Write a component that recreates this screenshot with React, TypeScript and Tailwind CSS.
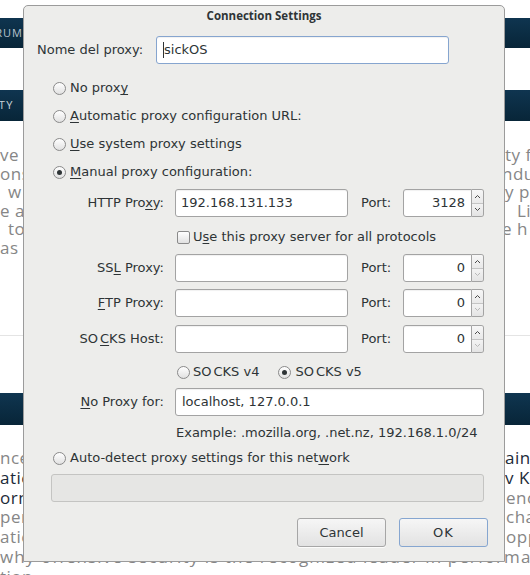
import React from "react";

function U({ children }: { children: React.ReactNode }) {
  return <span className="underline decoration-[1px] underline-offset-[2px]">{children}</span>;
}

function Radio({ checked = false }: { checked?: boolean }) {
  return (
    <span className="flex w-[13px] h-[13px] shrink-0 items-center justify-center rounded-full border border-[#8a8a8a] bg-linear-to-b from-[#ffffff] to-[#e1e1e1]">
      {checked ? <span className="w-[5px] h-[5px] rounded-full bg-[#2e3436]" /> : null}
    </span>
  );
}

function Check() {
  return (
    <span className="w-[13px] h-[13px] shrink-0 rounded-[2px] border border-[#8a8a8a] bg-linear-to-b from-[#ffffff] to-[#e1e1e1]" />
  );
}

function Chevron({ up, dim }: { up?: boolean; dim?: boolean }) {
  return (
    <svg width="7" height="5" viewBox="0 0 7 5">
      <path
        d={up ? "M1 4L3.5 1.5L6 4" : "M1 1L3.5 3.5L6 1"}
        fill="none"
        stroke={dim ? "#b8b8b8" : "#4a4a4a"}
        strokeWidth="1"
      />
    </svg>
  );
}

function Spin({ value, downDim }: { value: string; downDim?: boolean }) {
  return (
    <div className="flex h-[28px]">
      <div className="w-[69px] h-full rounded-l-[3px] border border-[#a3a3a3] bg-white flex items-center justify-end pr-[6px] shadow-[inset_0_1px_1px_rgba(0,0,0,0.06)]">
        {value}
      </div>
      <div className="w-[12px] h-full flex flex-col border border-l-0 border-[#a3a3a3] rounded-r-[3px] overflow-hidden">
        <div className="flex-1 flex items-center justify-center bg-linear-to-b from-[#f7f7f7] to-[#e9e9e9] border-b border-[#c4c4c4]">
          <Chevron up />
        </div>
        <div className="flex-1 flex items-center justify-center bg-linear-to-b from-[#f3f3f3] to-[#e4e4e4]">
          <Chevron dim={downDim} />
        </div>
      </div>
    </div>
  );
}

function ProxyRow({ label, value, port, downDim }: { label: React.ReactNode; value: string; port: string; downDim?: boolean }) {
  return (
    <div className="flex items-center h-[28px]">
      <div className="w-[140px] text-right whitespace-nowrap">{label}</div>
      <div className="ml-[11px] w-[173px] h-[28px] rounded-[3px] border border-[#a3a3a3] bg-white flex items-center px-[5px] shadow-[inset_0_1px_1px_rgba(0,0,0,0.06)]">
        {value}
      </div>
      <div className="ml-[13px] w-[42px]">Port:</div>
      <Spin value={port} downDim={downDim} />
    </div>
  );
}

function RadioRow({ checked, children }: { checked?: boolean; children: React.ReactNode }) {
  return (
    <div className="flex items-center h-[28px] pl-[29px] gap-[4px]">
      <Radio checked={checked} />
      <span className="whitespace-nowrap">{children}</span>
    </div>
  );
}

function Background() {
  const grey = "text-[#868686]";
  const dark = "text-[#1c2a38]";
  return (
    <div className="w-[530px] font-['Open_Sans',sans-serif]">
      <div className="h-[18px]" />
      <div className="h-[30px] bg-linear-to-b from-[#0f3550] to-[#082538] flex items-center">
        <div className="w-[23px] flex justify-end overflow-hidden">
          <span className="text-[11px] tracking-[1px] text-[#b8c4ce] whitespace-nowrap">FORUM</span>
        </div>
      </div>
      <div className="h-[42px]" />
      <div className="h-[31px] bg-linear-to-b from-[#0f3550] to-[#082538] flex items-center">
        <div className="w-[14px] flex justify-end overflow-hidden">
          <span className="text-[11px] tracking-[1.5px] text-[#c9d3da] whitespace-nowrap">SECURITY</span>
        </div>
      </div>
      <div className={`h-[214px] pt-[25px] flex justify-between text-[17px] leading-[18.6px] tracking-[0.5px] ${grey}`}>
        <div className="w-[23px] whitespace-nowrap overflow-hidden">
          <div>ve</div>
          <div>ons</div>
          <div className="pl-[8px]">w</div>
          <div>e a</div>
          <div className="pl-[8px]">to</div>
          <div>as u</div>
        </div>
        <div className="w-[25px] whitespace-nowrap overflow-hidden">
          <div>ty f</div>
          <div className="-ml-[3px]">ndu</div>
          <div>y p</div>
          <div className="pl-[12px]">Li</div>
          <div className="-ml-[3px]">e h</div>
        </div>
      </div>
      <div className="h-px bg-[#e4e4e4]" />
      <div className="h-[57px]" />
      <div className="h-[32px] bg-linear-to-b from-[#0f3550] to-[#082538]" />
      <div className="pt-[23px] text-[17px] leading-[19.8px] whitespace-nowrap tracking-[0.5px]">
        <div className="flex justify-between">
          <span className={`${grey} w-[23px] overflow-hidden`}>nce</span>
          <span className={`${dark} w-[25px] overflow-hidden`}>ain</span>
        </div>
        <div className="flex justify-between">
          <span className={`${dark} w-[23px] overflow-hidden`}>atic</span>
          <span className={`${dark} w-[25px] overflow-hidden`}>v Ka</span>
        </div>
        <div className="flex justify-between">
          <span className={`${dark} w-[23px] overflow-hidden`}>orm</span>
          <span className={`${grey} w-[24px] overflow-hidden`}>enc</span>
        </div>
        <div className="flex justify-between">
          <span className={`${grey} w-[23px] overflow-hidden`}>pen</span>
          <span className={`${grey} w-[24px] overflow-hidden`}>cha</span>
        </div>
        <div className="flex justify-between">
          <span className={`${grey} w-[23px] overflow-hidden`}>atic</span>
          <span className={`${grey} w-[24px] overflow-hidden`}>opp</span>
        </div>
        <div className={`${grey} tracking-[1.1px]`}>why offensive security is the recognized leader in performance</div>
        <div className={grey}>tion</div>
      </div>
    </div>
  );
}

export default function App() {
  return (
    <div className="relative w-[530px] h-[575px] overflow-hidden bg-white">
      <Background />
      <div className="absolute left-[23px] top-[5px] w-[482px] h-[557px] rounded-t-[5px] border border-[#9b9b9b] bg-[#ededeb] flex flex-col text-[13px] text-[#2e3436] font-['DejaVu_Sans',sans-serif]">
        <div className="h-[20px] flex items-center justify-center font-['Open_Sans',sans-serif] font-bold text-[11.5px] text-[#2e3436]">
          Connection Settings
        </div>

        <div className="mt-[10px] flex items-center h-[28px] pl-[13px]">
          <div className="w-[119px] whitespace-nowrap">Nome del proxy:</div>
          <div className="w-[293px] h-[28px] rounded-[3px] border border-[#86a5cf] bg-white flex items-center pl-[6px] shadow-[inset_0_1px_1px_rgba(0,0,0,0.06)]">
            <span className="w-px h-[16px] bg-[#2e3436]" />
            <span>sickOS</span>
          </div>
        </div>

        <div className="mt-[10px]">
          <RadioRow>
            No prox<U>y</U>
          </RadioRow>
          <RadioRow>
            <U>A</U>utomatic proxy configuration URL:
          </RadioRow>
          <RadioRow>
            <U>U</U>se system proxy settings
          </RadioRow>
          <RadioRow checked>
            <U>M</U>anual proxy configuration:
          </RadioRow>
        </div>

        <div className="mt-[3px]">
          <ProxyRow
            label={
              <>
                HTTP Pro<U>x</U>y:
              </>
            }
            value="192.168.131.133"
            port="3128"
          />
        </div>

        <div className="mt-[6px] flex items-center h-[28px] pl-[153px] gap-[3px]">
          <Check />
          <span className="whitespace-nowrap">
            U<U>s</U>e this proxy server for all protocols
          </span>
        </div>

        <div className="mt-[3px]">
          <ProxyRow
            label={
              <>
                SS<U>L</U> Proxy:
              </>
            }
            value=""
            port="0"
            downDim
          />
        </div>
        <div className="mt-[7px]">
          <ProxyRow
            label={
              <>
                <U>F</U>TP Proxy:
              </>
            }
            value=""
            port="0"
            downDim
          />
        </div>
        <div className="mt-[8px]">
          <ProxyRow
            label={
              <>
                SO<span className="ml-[2px]" />
                <U>C</U>KS Host:
              </>
            }
            value=""
            port="0"
            downDim
          />
        </div>

        <div className="mt-[5px] flex items-center h-[28px] pl-[153px]">
          <Radio />
          <span className="ml-[3px] whitespace-nowrap">
            SO<span className="ml-[2px]">CKS v4</span>
          </span>
          <span className="ml-[19px]">
            <Radio checked />
          </span>
          <span className="ml-[4px] whitespace-nowrap">
            SO<span className="ml-[2px]">CKS v5</span>
          </span>
        </div>

        <div className="mt-[2px] flex items-center h-[28px]">
          <div className="w-[140px] text-right whitespace-nowrap">
            <U>N</U>o Proxy for:
          </div>
          <div className="ml-[11px] w-[309px] h-[28px] rounded-[3px] border border-[#a3a3a3] bg-white flex items-center px-[6px] shadow-[inset_0_1px_1px_rgba(0,0,0,0.06)]">
            localhost, 127.0.0.1
          </div>
        </div>

        <div className="mt-[4px] h-[26px] flex items-center pl-[152px] whitespace-nowrap">
          Example: .mozilla.org, .net.nz, 192.168.1.0/24
        </div>

        <div className="h-[24px] flex items-center pl-[29px] gap-[4px]">
          <Radio />
          <span className="whitespace-nowrap">
            Auto-detect proxy settings for this net<U>w</U>ork
          </span>
        </div>

        <div className="mt-[4px] ml-[27px] w-[433px] h-[28px] rounded-[3px] border border-[#c4c4c2] bg-[#e6e6e4]" />

        <div className="mt-[16px] flex justify-end pr-[16px] gap-[13px]">
          <div className="w-[89px] h-[29px] rounded-[3px] border border-[#a6a6a6] bg-linear-to-b from-[#f6f6f6] to-[#e2e2e2] flex items-center justify-center shadow-[0_1px_0_rgba(255,255,255,0.8)]">
            Cancel
          </div>
          <div className="w-[89px] h-[29px] rounded-[3px] border border-[#86a6d0] bg-linear-to-b from-[#f6f6f6] to-[#e2e2e2] flex items-center justify-center tracking-[1px]">
            OK
          </div>
        </div>
      </div>
    </div>
  );
}
